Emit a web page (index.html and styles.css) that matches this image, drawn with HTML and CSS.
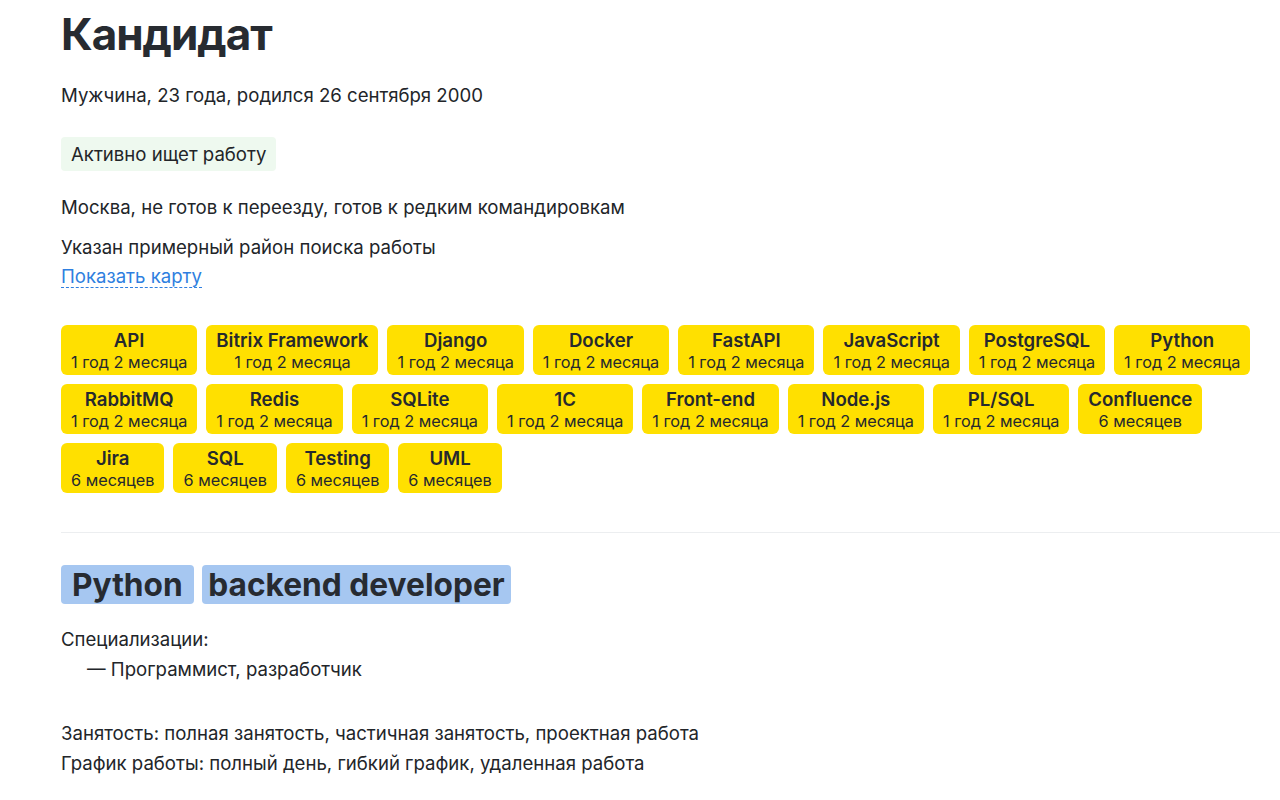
FILE: index.html
```html
<!DOCTYPE html>
<html lang="ru">
<head>
<meta charset="utf-8">
<link rel="stylesheet" href="styles.css">
</head>
<body>
<main class="resume">
  <h1 class="title">Кандидат</h1>
  <p class="info">Мужчина, 23 года, родился 26 сентября 2000</p>
  <div class="status"><span class="status-badge">Активно ищет работу</span></div>
  <p class="info location">Москва, не готов к переезду, готов к редким командировкам</p>
  <p class="info area">Указан примерный район поиска работы</p>
  <a class="map-link" href="#">Показать карту</a>

  <ul class="skills">
    <li class="skill"><b>API</b><span>1 год 2 месяца</span></li>
    <li class="skill"><b>Bitrix Framework</b><span>1 год 2 месяца</span></li>
    <li class="skill"><b>Django</b><span>1 год 2 месяца</span></li>
    <li class="skill"><b>Docker</b><span>1 год 2 месяца</span></li>
    <li class="skill"><b>FastAPI</b><span>1 год 2 месяца</span></li>
    <li class="skill"><b>JavaScript</b><span>1 год 2 месяца</span></li>
    <li class="skill"><b>PostgreSQL</b><span>1 год 2 месяца</span></li>
    <li class="skill"><b>Python</b><span>1 год 2 месяца</span></li>
    <li class="skill"><b>RabbitMQ</b><span>1 год 2 месяца</span></li>
    <li class="skill"><b>Redis</b><span>1 год 2 месяца</span></li>
    <li class="skill"><b>SQLite</b><span>1 год 2 месяца</span></li>
    <li class="skill"><b>1С</b><span>1 год 2 месяца</span></li>
    <li class="skill"><b>Front-end</b><span>1 год 2 месяца</span></li>
    <li class="skill"><b>Node.js</b><span>1 год 2 месяца</span></li>
    <li class="skill"><b>PL/SQL</b><span>1 год 2 месяца</span></li>
    <li class="skill"><b>Confluence</b><span>6 месяцев</span></li>
    <li class="skill"><b>Jira</b><span>6 месяцев</span></li>
    <li class="skill"><b>SQL</b><span>6 месяцев</span></li>
    <li class="skill"><b>Testing</b><span>6 месяцев</span></li>
    <li class="skill"><b>UML</b><span>6 месяцев</span></li>
  </ul>

  <hr class="divider">

  <h2 class="position"><span class="hl hl-first">Python</span> <span class="hl">backend developer</span></h2>

  <p class="info spec-label">Специализации:</p>
  <p class="info spec-item">— Программист, разработчик</p>

  <p class="info employment">Занятость: полная занятость, частичная занятость, проектная работа</p>
  <p class="info schedule">График работы: полный день, гибкий график, удаленная работа</p>
</main>
</body>
</html>
```

FILE: styles.css
```css
* { box-sizing: border-box; }

html, body {
  margin: 0;
  padding: 0;
  background: #ffffff;
}

body {
  font-family: Inter, "Noto Sans", "DejaVu Sans", sans-serif;
  color: #222529;
  font-size: 18.6px;
  line-height: 1.5;
  overflow: hidden;
}

.resume {
  padding: 0 0 0 61px;
  width: 1300px;
}

.title {
  margin: 4px 0 0;
  font-size: 44px;
  line-height: 60px;
  font-weight: 700;
  color: #272b31;
  letter-spacing: -1px;
}

.info {
  margin: 0;
  font-size: 18.6px;
  line-height: 30px;
}

.title + .info {
  margin-top: 16px;
}

.status {
  margin-top: 27px;
}

.status-badge {
  display: inline-block;
  background: #eef9ef;
  padding: 0 10px;
  height: 34px;
  line-height: 34px;
  border-radius: 4px;
}

.location {
  margin-top: 21px;
}

.area {
  margin-top: 10px;
}

.map-link {
  display: inline-block;
  color: #2f7fe0;
  text-decoration: none;
  border-bottom: 1px dashed #2f7fe0;
  line-height: 22px;
  margin-top: 3px;
}

.skills {
  list-style: none;
  margin: 34px 0 0;
  padding: 0;
  display: flex;
  flex-wrap: wrap;
  gap: 9px 9px;
  width: 1225px;
}

.skill {
  background: #ffe000;
  border-radius: 6px;
  padding: 3px 10px 3px;
  display: flex;
  flex-direction: column;
  align-items: center;
  text-align: center;
}

.skill b {
  font-size: 18.6px;
  line-height: 24px;
  font-weight: 600;
  color: #26292e;
}

.skill span {
  font-size: 16.3px;
  line-height: 20px;
  color: #26292e;
}

.divider {
  border: 0;
  border-top: 1px solid #eceef0;
  margin: 39px 0 0;
  width: 1240px;
}

.position {
  margin: 34px 0 0;
  font-size: 31.7px;
  line-height: 36px;
  font-weight: 700;
  color: #272b31;
  word-spacing: 1px;
}

.hl {
  background: #a6c7f1;
  border-radius: 4px;
  padding: 0 6px;
  word-spacing: 0;
}

.hl-first {
  padding: 0 11px;
}

.spec-label {
  margin-top: 21px;
}

.spec-item {
  padding-left: 26px;
}

.employment {
  margin-top: 34px;
}
```
